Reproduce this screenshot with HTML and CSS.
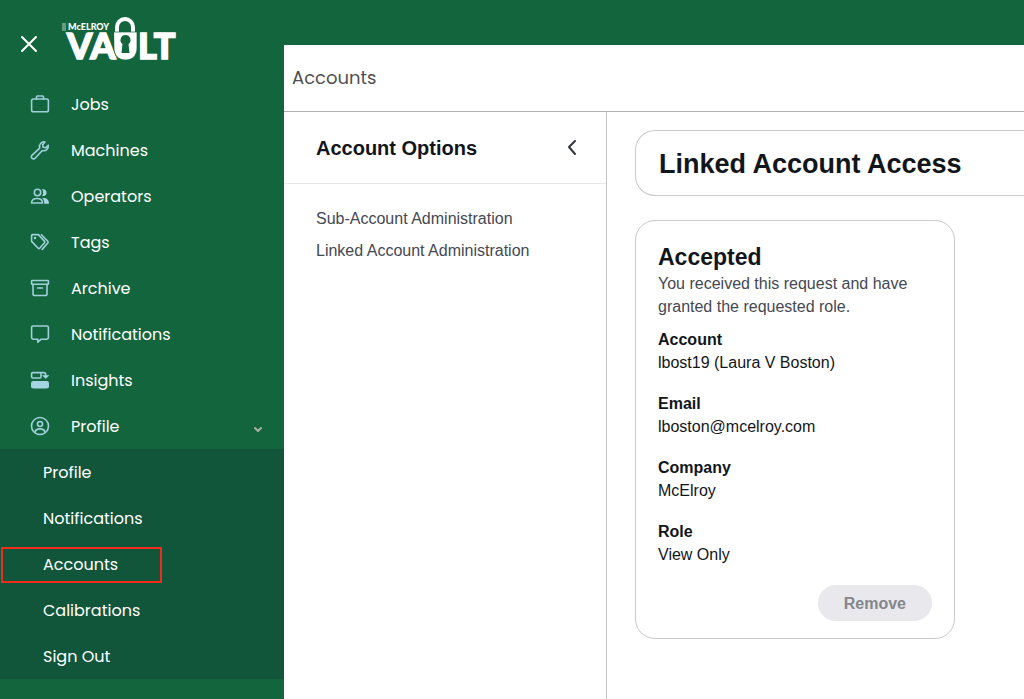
FILE: index.html
```html
<!DOCTYPE html>
<html lang="en">

<head>
    <meta charset="UTF-8">
    <meta name="viewport" content="width=device-width, initial-scale=1">
    <title>Accounts</title>
    <link rel="stylesheet" href="styles.css">
</head>

<body>
    <div class="app">
        <aside class="sidebar">
            <div class="brand">
                <button class="close" type="button" aria-label="Close menu">
                    <svg width="20" height="20" viewBox="0 0 20 20"><path d="M3 3l14 14M17 3L3 17"/></svg>
                </button>
                <a class="logo" href="#" aria-label="McElroy Vault">
                    <svg width="124" height="60" viewBox="0 0 124 60">
                        <path class="logo-box" d="M2 11h4M2 13h4M2 15h4M2 17h4"/>
                        <text class="logo-small" x="8" y="17">McELROY</text>
                        <text class="logo-big" x="7" y="46">VA</text>
                        <text class="logo-big" x="78" y="46">LT</text>
                        <path class="shackle" d="M57 20V14a8 8 0 0 1 16 0v6"/>
                        <path class="lock" d="M54 19h23v16c0 7-4 12-11.500 12S54 42 54 35z"/>
                        <path class="keyhole" d="M65.500 22a5 5 0 0 1 3 9l1 9h-8l1-9a5 5 0 0 1 3-9z"/>
                    </svg>
                </a>
            </div>

            <nav>
                <ul class="menu">
                    <li><a href="#">
                        <svg class="icon" viewBox="0 0 20 20"><rect x="1.6" y="5" width="16.8" height="12.8" rx="1.8"/><path d="M6.5 5V3a1 1 0 0 1 1-1h5a1 1 0 0 1 1 1v2"/></svg>
                        Jobs</a></li>
                    <li><a href="#">
                        <svg class="icon" viewBox="0 0 20 20"><path d="M18.300 5.200c.5 3.800-2.700 6.300-6 5.300l-7.200 7.700a2 2 0 0 1-3.200-2.900l7.800-7.200C8.500 4.700 11.500 1.200 15 2l-2.400 2.700.5 2.500 2.600.6z"/></svg>
                        Machines</a></li>
                    <li><a href="#">
                        <svg class="icon" viewBox="0 0 20 20"><circle cx="7.5" cy="6.500" r="3.2"/><path d="M1.5 17c0-3.200 2.100-4.500 5.500-4.500s5.500 1.300 5.500 4.500z"/><path class="solid" d="M12 3c3 0 4.600 1.400 4.600 3.700S14.800 10.300 12 10.300c1.500-2.500 1.500-4.800 0-7.300zM13.300 12c3.600 0 5.700 2 5.700 5.700h-4.800c0-2.500-.4-4.200-2-5.400z"/></svg>
                        Operators</a></li>
                    <li><a href="#">
                        <svg class="icon" viewBox="0 0 20 20"><path d="M1.6 3.6a1 1 0 0 1 1-1h5.8l6.2 6.800a1 1 0 0 1 0 1.400l-5 5.400a1 1 0 0 1-1.400 0L1.600 9.400z"/><path d="M11.500 2.800l6.300 6.400a1.300 1.300 0 0 1 0 1.800l-5.600 6.400"/><circle class="solid" cx="5" cy="6" r="1.200"/></svg>
                        Tags</a></li>
                    <li><a href="#">
                        <svg class="icon" viewBox="0 0 20 20"><rect x="1.6" y="2.5" width="16.8" height="3.8" rx=".6"/><path d="M3 6.5v9.2c0 1.1.7 1.8 1.8 1.8h10.400c1.100 0 1.800-.7 1.800-1.800V6.500M7.500 10h5"/></svg>
                        Archive</a></li>
                    <li><a href="#">
                        <svg class="icon" viewBox="0 0 20 20"><path d="M3.200 2h13.600c1 0 1.600.6 1.600 1.600v10c0 1-.6 1.600-1.600 1.600h-5.600l-3.400 3v-3H3.200c-1 0-1.600-.6-1.600-1.600v-10c0-1 .6-1.600 1.600-1.600z"/></svg>
                        Notifications</a></li>
                    <li><a href="#">
                        <svg class="icon" viewBox="0 0 20 20"><rect x="1.600" y="2.600" width="9.400" height="5.400" rx="1.200"/><path d="M10 2.600h3.500c1.500 0 2.200.7 2.200 1.800v1.200"/><path class="solid" d="M12 5.200h7.400l-3.700 3.600z"/><rect class="solid" x="1" y="11" width="18" height="7.500" rx="2.200"/></svg>
                        Insights</a></li>
                    <li><a href="#" aria-expanded="true">
                        <svg class="icon" viewBox="0 0 20 20"><circle cx="10" cy="10" r="8.500"/><circle cx="10" cy="8" r="2.500"/><path d="M4.800 16.500c.6-2.500 2.500-3.600 5.200-3.600s4.600 1.100 5.200 3.600"/></svg>
                        Profile
                        <svg class="caret" width="8" height="8" viewBox="0 0 8 8"><path d="M1 2l3 3 3-3"/></svg></a></li>
                </ul>
                <ul class="submenu">
                    <li><a href="#">Profile</a></li>
                    <li><a href="#">Notifications</a></li>
                    <li><a class="current" href="#" aria-current="page">Accounts</a></li>
                    <li><a href="#">Calibrations</a></li>
                    <li><a href="#">Sign Out</a></li>
                </ul>
            </nav>
        </aside>

        <main class="page">
            <header class="page-header">
                <h1>Accounts</h1>
            </header>

            <div class="columns">
                <section class="options">
                    <div class="options-header">
                        <h2>Account Options</h2>
                        <button class="collapse" type="button" aria-label="Collapse options">
                            <svg width="12" height="18" viewBox="0 0 12 18"><path d="M9 2L3 8l6 7"/></svg>
                        </button>
                    </div>
                    <ul class="options-list">
                        <li><a href="#">Sub-Account Administration</a></li>
                        <li><a href="#">Linked Account Administration</a></li>
                    </ul>
                </section>

                <section class="content">
                    <div class="title-card">
                        <h2>Linked Account Access</h2>
                    </div>

                    <div class="card">
                        <h3>Accepted</h3>
                        <p>You received this request and have granted the requested role.</p>
                        <dl>
                            <div>
                                <dt>Account</dt>
                                <dd>lbost19 (Laura V Boston)</dd>
                            </div>
                            <div>
                                <dt>Email</dt>
                                <dd>lboston@mcelroy.com</dd>
                            </div>
                            <div>
                                <dt>Company</dt>
                                <dd>McElroy</dd>
                            </div>
                            <div>
                                <dt>Role</dt>
                                <dd>View Only</dd>
                            </div>
                        </dl>
                        <button class="remove" type="button">Remove</button>
                    </div>
                </section>
            </div>
        </main>
    </div>
</body>

</html>
```
FILE: styles.css
```css
*,
*::after {
    box-sizing: border-box;
}

body {
    margin: 0;
    background-color: #13653d;
    color: #12161b;
    font-family: "Helvetica Neue", "Liberation Sans", Arial, sans-serif;
    font-size: 16px;
    line-height: 23px;
}

h1, h2, h3, p, ul, dl, dd {
    margin: 0;
    padding: 0;
}

ul {
    list-style: none;
}

a {
    color: inherit;
    text-decoration: none;
}

button {
    border: none;
    padding: 0;
    background: none;
    font: inherit;
    cursor: pointer;
}

svg {
    display: block;
    fill: none;
    stroke-linecap: round;
    stroke-linejoin: round;
}

.app {
    display: flex;
    min-height: 100vh;
}

/* sidebar */
.sidebar {
    width: 284px;
    flex-shrink: 0;
    color: #fff;
    font-family: Poppins, Inter, sans-serif;
    font-size: 16px;
}

.brand {
    display: flex;
    align-items: flex-start;
    gap: 21px;
    height: 81px;
    padding: 13px 19px;
}

.close {
    margin-top: 21px;
}

.close svg {
    stroke: #fff;
    stroke-width: 2;
}

.logo-small,
.logo-big {
    fill: #fff;
    font-family: Lato, sans-serif;
    font-weight: 900;
}

.logo-small {
    font-size: 9px;
}

.logo-big {
    font-size: 36px;
    stroke: #fff;
    stroke-width: 1.5;
    stroke-linejoin: miter;
}

.logo-box {
    stroke: #b9d5c6;
    stroke-width: 1;
    stroke-linecap: butt;
}

.shackle {
    stroke: #fff;
    stroke-width: 4;
}

.lock {
    fill: #fff;
    stroke: #13653d;
    stroke-width: 0.7;
}

.keyhole {
    fill: #13653d;
}

.menu a {
    display: flex;
    align-items: center;
    gap: 21px;
    height: 46px;
    padding: 0 22px 0 30px;
}

.icon {
    width: 20px;
    height: 20px;
    stroke: #9fcfda;
    stroke-width: 1.6;
}

.icon .solid {
    fill: #a5d5e2;
    stroke: none;
}

.caret {
    margin: 8px 0 0 auto;
    stroke: #a9aeab;
    stroke-width: 2;
}

.submenu {
    background-color: #11553b;
}

.submenu a {
    display: flex;
    align-items: center;
    position: relative;
    height: 46px;
    padding-left: 43px;
}

.submenu .current::after {
    content: "";
    position: absolute;
    top: 6px;
    left: 1px;
    width: 161px;
    height: 36px;
    border: 2px solid #f02c1b;
}

/* page */
.page {
    display: flex;
    flex-direction: column;
    flex: 1;
    min-width: 0;
    margin-top: 45px;
    background-color: #fff;
}

.page-header {
    padding: 20px 8px;
    border-bottom: 1px solid #b0b0b0;
}

.page-header h1 {
    color: #4f4f4f;
    font-family: Poppins, Inter, sans-serif;
    font-size: 18px;
    font-weight: 400;
    line-height: 26px;
}

.columns {
    display: flex;
    flex: 1;
}

.options {
    width: 323px;
    flex-shrink: 0;
    border-right: 1px solid #c4c4c6;
}

.options-header {
    display: flex;
    align-items: center;
    justify-content: space-between;
    height: 72px;
    padding: 0 28px 0 32px;
    border-bottom: 1px solid #e8e8ea;
}

.options-header h2 {
    font-size: 20px;
    line-height: 28px;
}

.collapse svg {
    stroke: #34363f;
    stroke-width: 2;
}

.options-list {
    padding: 19px 32px;
    color: #454851;
}

.options-list a {
    display: block;
    line-height: 32px;
}

.content {
    flex: 1;
    min-width: 0;
    padding: 18px 0 24px 28px;
}

.title-card {
    padding: 17px 23px 15px;
    border: 1px solid #c9c9ce;
    border-right: none;
    border-radius: 20px 0 0 20px;
}

.title-card h2 {
    font-size: 27px;
    line-height: 32px;
}

.card {
    display: flex;
    flex-direction: column;
    width: 320px;
    max-width: 100%;
    margin-top: 24px;
    padding: 22px 22px 17px;
    border: 1px solid #c9c9ce;
    border-radius: 20px;
}

.card h3 {
    font-size: 23px;
    line-height: 28px;
}

.card p {
    margin-top: 1px;
    color: #454851;
}

.card dl {
    display: flex;
    flex-direction: column;
    gap: 18px;
    margin-top: 10px;
}

.card dt {
    font-weight: bold;
}

.remove {
    align-self: flex-end;
    height: 36px;
    margin-top: 19px;
    padding: 0 26px;
    border-radius: 18px;
    background-color: #e8e8ed;
    color: #85868b;
    font-weight: bold;
}
```
